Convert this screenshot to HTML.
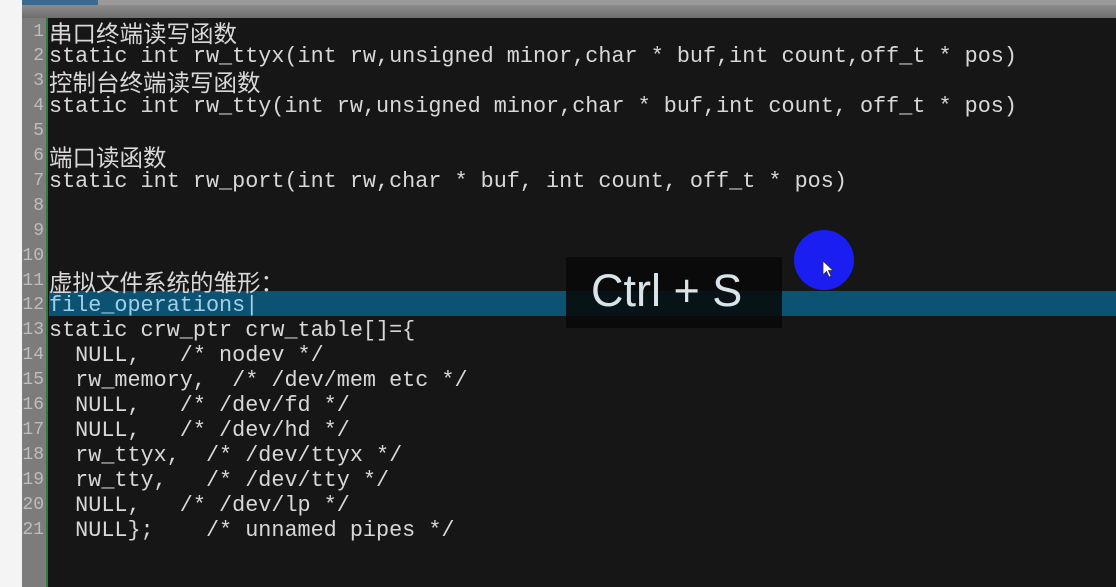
<!DOCTYPE html>
<html><head><meta charset="utf-8"><style>
html,body{margin:0;padding:0;width:1116px;height:587px;overflow:hidden;background:#f4f4f4;}
.wrap{position:absolute;left:22px;top:0;width:1094px;height:587px;background:#161616;overflow:hidden;}
.tabs{position:absolute;left:0;top:0;width:1094px;height:5px;background:#9a9a9a;}
.tab{position:absolute;left:0;top:0;width:76px;height:5px;background:#3d6a90;}
.ruler{position:absolute;left:0;top:5px;width:1094px;height:13px;background:linear-gradient(#8c8c8c,#6e6e6e);}
.gutter{position:absolute;left:0;top:18px;width:24px;height:569px;background:#7c7c7c;}
.green{position:absolute;left:24px;top:18px;width:2px;height:569px;background:#2e7d3a;}
.hl{position:absolute;left:27px;top:291px;width:1067px;height:25px;background:#0c5273;}
.l{position:absolute;left:0;height:25px;line-height:25px;font-family:"Liberation Mono","Courier New",monospace;font-size:21.8px;color:#d8d8d8;white-space:pre;}
.ln{position:absolute;left:0;top:2px;width:22px;text-align:right;color:#bdbdbd;font-size:18px;line-height:25px;}
.tx{position:absolute;left:27px;top:2px;line-height:25px;}
.cn{font-family:"Noto Sans CJK SC",sans-serif;font-size:23.5px;top:2px;}
.sel{color:#9fd0e8;}
.ov{position:absolute;left:566px;top:257px;width:216px;height:71px;background:rgba(8,8,8,0.85);}
.ovt{position:absolute;left:591px;top:265px;font-family:"Liberation Sans",sans-serif;font-size:45px;color:#d8e4ea;}
.dot{position:absolute;left:794px;top:230px;width:60px;height:60px;border-radius:50%;background:#1a1ef0;}
</style></head><body>
<div class="wrap">
<div class="tabs"><div class="tab"></div></div>
<div class="ruler"></div>
<div class="gutter"></div>
<div class="hl"></div>
<div class="green"></div>
<div class="l" style="top:17.5px"><span class="ln">1</span><span class="tx cn">串口终端读写函数</span></div>
<div class="l" style="top:42.4px"><span class="ln">2</span><span class="tx">static int rw_ttyx(int rw,unsigned minor,char * buf,int count,off_t * pos)</span></div>
<div class="l" style="top:67.3px"><span class="ln">3</span><span class="tx cn">控制台终端读写函数</span></div>
<div class="l" style="top:92.2px"><span class="ln">4</span><span class="tx">static int rw_tty(int rw,unsigned minor,char * buf,int count, off_t * pos)</span></div>
<div class="l" style="top:117.1px"><span class="ln">5</span></div>
<div class="l" style="top:142px"><span class="ln">6</span><span class="tx cn">端口读函数</span></div>
<div class="l" style="top:166.9px"><span class="ln">7</span><span class="tx">static int rw_port(int rw,char * buf, int count, off_t * pos)</span></div>
<div class="l" style="top:191.8px"><span class="ln">8</span></div>
<div class="l" style="top:216.7px"><span class="ln">9</span></div>
<div class="l" style="top:241.6px"><span class="ln">10</span></div>
<div class="l" style="top:266.5px"><span class="ln">11</span><span class="tx cn">虚拟文件系统的雏形：</span></div>
<div class="l" style="top:291.4px"><span class="ln">12</span><span class="tx sel">file_operations|</span></div>
<div class="l" style="top:316.3px"><span class="ln">13</span><span class="tx">static crw_ptr crw_table[]={</span></div>
<div class="l" style="top:341.2px"><span class="ln">14</span><span class="tx">  NULL,   /* nodev */</span></div>
<div class="l" style="top:366.1px"><span class="ln">15</span><span class="tx">  rw_memory,  /* /dev/mem etc */</span></div>
<div class="l" style="top:391px"><span class="ln">16</span><span class="tx">  NULL,   /* /dev/fd */</span></div>
<div class="l" style="top:415.9px"><span class="ln">17</span><span class="tx">  NULL,   /* /dev/hd */</span></div>
<div class="l" style="top:440.8px"><span class="ln">18</span><span class="tx">  rw_ttyx,  /* /dev/ttyx */</span></div>
<div class="l" style="top:465.7px"><span class="ln">19</span><span class="tx">  rw_tty,   /* /dev/tty */</span></div>
<div class="l" style="top:490.6px"><span class="ln">20</span><span class="tx">  NULL,   /* /dev/lp */</span></div>
<div class="l" style="top:515.5px"><span class="ln">21</span><span class="tx">  NULL};    /* unnamed pipes */</span></div>
</div>
<div class="ov"></div>
<div class="ovt">Ctrl + S</div>
<div class="dot"></div>
<svg style="position:absolute;left:822px;top:260px" width="14" height="20" viewBox="0 0 14 20"><path d="M1 1 L1 15 L4.5 11.5 L7 17 L9 16 L6.5 10.5 L11 10.5 Z" fill="#fff" stroke="#333" stroke-width="0.8"/></svg>
</body></html>
